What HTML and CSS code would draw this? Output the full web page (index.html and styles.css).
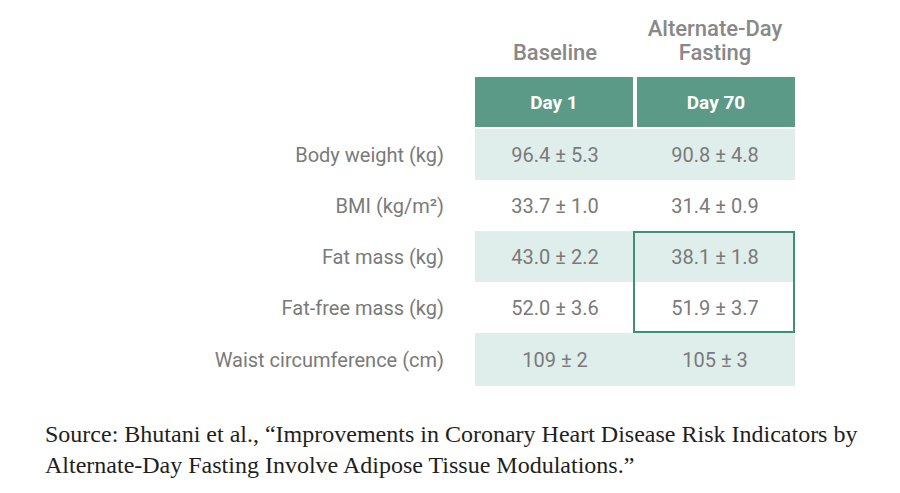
FILE: index.html
```html
<!DOCTYPE html>
<html>
<head>
<meta charset="utf-8">
<link rel="stylesheet" href="styles.css">
</head>
<body>
<div class="table">
  <div class="title c2 r1">Baseline</div>
  <div class="title c3 r1">Alternate-Day<br>Fasting</div>

  <div class="head h1">Day 1</div>
  <div class="head h2">Day 70</div>

  <div class="label r3">Body weight (kg)</div>
  <div class="cell c2 r3 shade">96.4 ± 5.3</div>
  <div class="cell c3 r3 shade">90.8 ± 4.8</div>

  <div class="label r4">BMI (kg/m²)</div>
  <div class="cell c2 r4">33.7 ± 1.0</div>
  <div class="cell c3 r4">31.4 ± 0.9</div>

  <div class="label r5">Fat mass (kg)</div>
  <div class="cell c2 r5 shade">43.0 ± 2.2</div>
  <div class="cell c3 r5 shade">38.1 ± 1.8</div>

  <div class="label r6">Fat-free mass (kg)</div>
  <div class="cell c2 r6">52.0 ± 3.6</div>
  <div class="cell c3 r6">51.9 ± 3.7</div>

  <div class="label r7">Waist circumference (cm)</div>
  <div class="cell c2 r7 shade">109 ± 2</div>
  <div class="cell c3 r7 shade">105 ± 3</div>

  <div class="highlight"></div>
</div>
<p class="source">Source: Bhutani et al., “Improvements in Coronary Heart Disease Risk Indicators by Alternate-Day Fasting Involve Adipose Tissue Modulations.”</p>
</body>
</html>
```
FILE: styles.css
```css
html, body {
  margin: 0;
  padding: 0;
  background: #ffffff;
}
.table {
  display: grid;
  grid-template-columns: 475px 160px 160px;
  grid-template-rows: 77px 52px 51px 51px 51px 51px 53px;
  font-family: Roboto, "Liberation Sans", sans-serif;
  color: #7a7a7a;
}
.c2 { grid-column: 2; }
.c3 { grid-column: 3; }
.r1 { grid-row: 1; }
.r3 { grid-row: 3; }
.r4 { grid-row: 4; }
.r5 { grid-row: 5; }
.r6 { grid-row: 6; }
.r7 { grid-row: 7; }
.title {
  font-size: 22px;
  font-weight: 500;
  color: #888888;
  text-align: center;
  align-self: end;
  line-height: 24px;
  padding-bottom: 12px;
}
.head {
  grid-row: 2;
  background: #5b9a86;
  color: #ffffff;
  font-size: 19px;
  font-weight: 700;
  display: flex;
  align-items: center;
  justify-content: center;
  margin-bottom: 2px;
}
.h1 { grid-column: 2; margin-right: 2px; }
.h2 { grid-column: 3; margin-left: 2px; }
.label {
  grid-column: 1;
  padding-right: 31px;
  font-size: 20px;
  display: flex;
  align-items: center;
  justify-content: flex-end;
}
.cell {
  font-size: 20px;
  display: flex;
  align-items: center;
  justify-content: center;
}
.shade { background: #dfeeeb; }
.highlight {
  grid-column: 3;
  grid-row: 5 / 7;
  margin-left: -2px;
  border: 2px solid #3e8f76;
  z-index: 1;
}
.source {
  margin: 33px 0 0 45px;
  width: 850px;
  font-family: "Liberation Serif", "Times New Roman", serif;
  font-size: 24px;
  line-height: 31px;
  color: #1e1e1e;
}
```
